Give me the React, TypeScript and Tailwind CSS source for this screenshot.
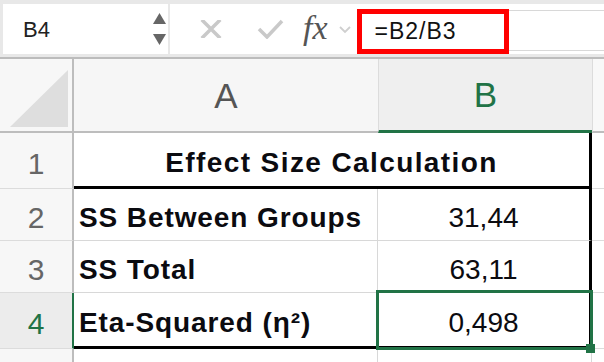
import React from "react";

const RowHead = ({ n, active = false, h }: { n: number; active?: boolean; h: string }) => (
  <div
    className={`${h} w-[74px] shrink-0 flex items-center justify-center pt-[5px] border-b border-[#dcdcdc] ${
      active ? "bg-[#ececec] border-r-2 border-r-[#217346] text-[#217346]" : "bg-[#f7f7f7] border-r-2 border-r-[#bdbdbd] text-[#666]"
    } text-[30px]`}
  >
    {n}
  </div>
);

export default function App() {
  return (
    <div className="relative w-[604px] h-[362px] overflow-hidden bg-white font-['Liberation_Sans',Arial,sans-serif]">
      {/* formula bar */}
      <div className="h-[59px] flex bg-[#e8e8e8] pt-[4px] pb-[3px] pl-[3px] border-b-2 border-[#bcbcbc]">
        <div className="w-[165px] bg-white flex items-center justify-between pl-[20px] pr-[2px]">
          <span className="text-[22px] text-[#222]">B4</span>
          <div className="flex flex-col gap-[10px]">
            <svg width="13" height="11" viewBox="0 0 13 11">
              <path d="M6.5 0 L13 11 L0 11 Z" fill="#666" />
            </svg>
            <svg width="13" height="11" viewBox="0 0 13 11">
              <path d="M0 0 L13 0 L6.5 11 Z" fill="#666" />
            </svg>
          </div>
        </div>
        <div className="ml-[2px] flex-1 bg-white flex items-center">
          <svg className="ml-[30px]" width="22" height="18" viewBox="0 0 22 18">
            <path d="M3 1 L19 17 M19 1 L3 17" stroke="#c9c9c9" strokeWidth="3.5" strokeLinecap="square" />
          </svg>
          <svg className="ml-[35px]" width="27" height="20" viewBox="0 0 27 20">
            <path d="M2 10 L10 18 L25 2" stroke="#c9c9c9" strokeWidth="3.5" fill="none" />
          </svg>
          <span className="ml-[19px] font-['Liberation_Serif',serif] italic text-[34px] text-[#555] leading-none -mt-[2px]">
            fx
          </span>
          <svg className="ml-[11px] mt-[2px]" width="12" height="8" viewBox="0 0 12 8">
            <path d="M1 1 L6 6 L11 1" stroke="#cfcfcf" strokeWidth="1.8" fill="none" />
          </svg>
          <div className="ml-[6px] self-end h-[45px] w-[152px] shrink-0 border-[5px] border-[#ff0000] flex items-center pl-[13px] text-[23px] text-[#111] tracking-[1px]">
            =B2/B3
          </div>
          <div className="flex-1 self-start mt-[6px] h-[41px] border-y border-[#d8d8d8]" />
        </div>
      </div>

      {/* column headers */}
      <div className="h-[74px] flex">
        <div className="w-[74px] shrink-0 bg-[#f7f7f7] border-r-2 border-[#bdbdbd] border-b-2 border-b-[#bdbdbd] flex items-end pl-[10px] pb-[4px]">
          <svg width="58" height="57" viewBox="0 0 58 57">
            <path d="M58 0 L58 57 L0 57 Z" fill="#dedede" />
          </svg>
        </div>
        <div className="w-[304px] shrink-0 bg-[#f6f6f6] border-b-2 border-[#bdbdbd] flex items-center justify-center pt-[2px] text-[35px] text-[#555]">
          A
        </div>
        <div className="w-[214px] shrink-0 bg-[#efefef] border-l border-[#dcdcdc] border-b-[3px] border-b-[#217346] flex items-center justify-center pt-[2px] text-[35px] text-[#217346]">
          B
        </div>
        <div className="flex-1 bg-[#f8f8f8] border-l border-[#dcdcdc] border-b-2 border-b-[#bdbdbd]" />
      </div>

      {/* row 1 */}
      <div className="flex">
        <RowHead n={1} h="h-[56px]" />
        <div className="w-[518px] h-[56px] shrink-0 border-b-[3px] border-r-[3px] border-black flex items-center justify-center pt-[6px] text-[28px] font-bold text-[#0b0b10] tracking-[1.4px]">
          Effect Size Calculation
        </div>
        <div className="flex-1 border-b border-[#dcdcdc]" />
      </div>

      {/* row 2 */}
      <div className="flex">
        <RowHead n={2} h="h-[52px]" />
        <div className="w-[304px] h-[52px] shrink-0 border-b border-r border-[#d8d8d8] flex items-center pl-[5px] pt-[6px] text-[28px] font-bold text-[#0b0b10] tracking-[0.9px]">
          SS Between Groups
        </div>
        <div className="w-[214px] h-[52px] shrink-0 border-b border-[#d8d8d8] border-r-[3px] border-r-black flex items-center justify-center pt-[6px] text-[28px] text-[#0b0b10]">
          31,44
        </div>
        <div className="flex-1 border-b border-[#dcdcdc]" />
      </div>

      {/* row 3 */}
      <div className="flex">
        <RowHead n={3} h="h-[52px]" />
        <div className="w-[304px] h-[52px] shrink-0 border-b border-r border-[#d8d8d8] flex items-center pl-[5px] pt-[6px] text-[28px] font-bold text-[#0b0b10] tracking-[0.9px]">
          SS Total
        </div>
        <div className="w-[214px] h-[52px] shrink-0 border-b border-[#d8d8d8] border-r-[3px] border-r-black flex items-center justify-center pt-[6px] text-[28px] text-[#0b0b10]">
          63,11
        </div>
        <div className="flex-1 border-b border-[#dcdcdc]" />
      </div>

      {/* row 4 */}
      <div className="flex">
        <RowHead n={4} active h="h-[56px]" />
        <div className="w-[304px] h-[56px] shrink-0 border-b-[3px] border-black border-r border-r-[#d8d8d8] flex items-center pl-[5px] pt-[6px] text-[28px] font-bold text-[#0b0b10] tracking-[0.9px]">
          Eta-Squared (η²)
        </div>
        <div className="w-[214px] h-[56px] shrink-0 border-b-[3px] border-r-[3px] border-black flex items-center justify-center pt-[6px] text-[28px] text-[#0b0b10]">
          0,498
        </div>
        <div className="flex-1 border-b border-[#dcdcdc]" />
      </div>

      {/* row 5 */}
      <div className="flex h-[20px]">
        <div className="w-[74px] shrink-0 bg-[#f7f7f7] border-r-2 border-[#bdbdbd]" />
        <div className="w-[304px] shrink-0 border-r border-[#d8d8d8]" />
        <div className="w-[214px] shrink-0 border-r border-[#d8d8d8]" />
      </div>

      {/* selection */}
      <div className="absolute left-[376px] top-[290px] w-[217px] h-[60px] border-[3px] border-[#217346]" />
      <div className="absolute left-[586px] top-[344px] w-[9px] h-[9px] bg-[#217346]" />
    </div>
  );
}
